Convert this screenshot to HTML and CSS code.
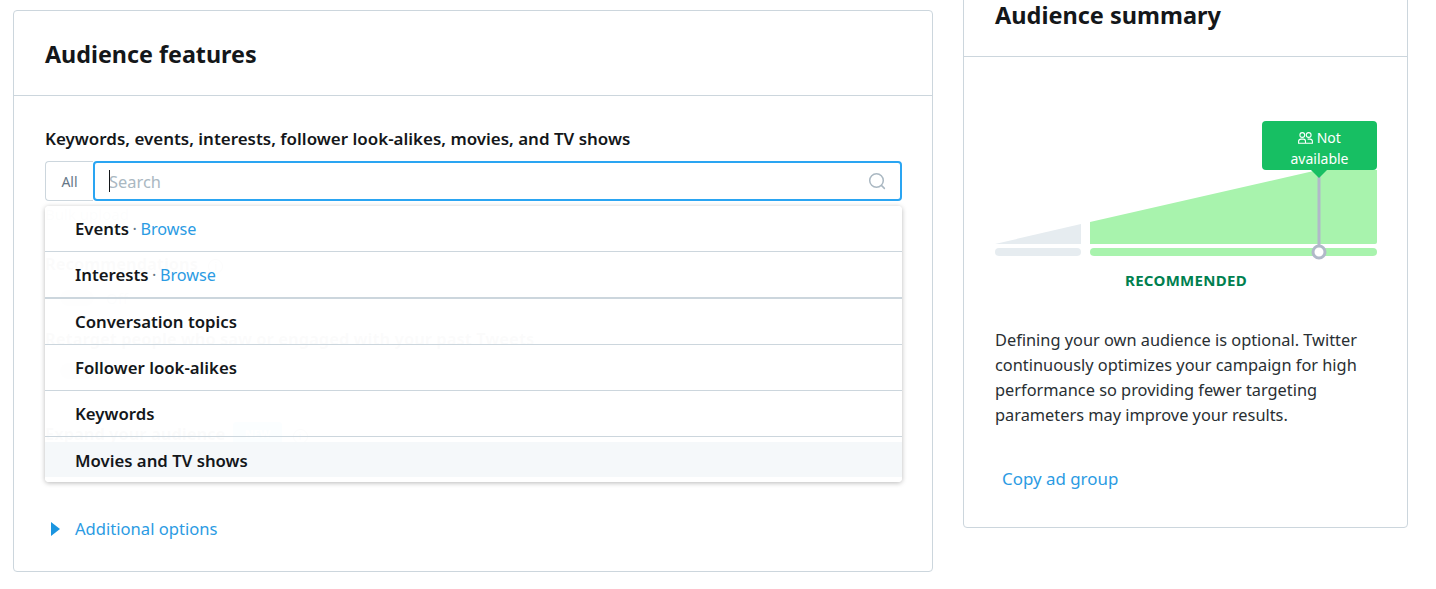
FILE: index.html
```html
<!DOCTYPE html>
<html lang="en">
<head>
<meta charset="utf-8">
<title>Audience features</title>
<link rel="stylesheet" href="styles.css">
</head>
<body>
<main class="page">
  <section class="card features">
    <header class="features-head"><h2 class="title">Audience features</h2></header>
    <div class="features-body">
      <div class="field-label">Keywords, events, interests, follower look-alikes, movies, and TV shows</div>
      <div class="search-wrap">
        <div class="search-row">
          <button class="all-btn">All</button>
          <div class="search-box">
            <span class="caret"></span>
            <input class="search-input" placeholder="Search">
            <svg class="search-icon" width="18" height="18" viewBox="0 0 18 18"><circle cx="8.5" cy="8.5" r="6.8" fill="none" stroke="#aab8c2" stroke-width="1.5"/><path d="M13.4 13.4l3 3" stroke="#aab8c2" stroke-width="1.5" stroke-linecap="round"/></svg>
          </div>
        </div>
        <div class="menu">
          <div class="menu-item"><b>Events</b> <span class="dot">·</span> <a class="link">Browse</a></div>
          <div class="menu-item thick"><b>Interests</b> <span class="dot">·</span> <a class="link">Browse</a></div>
          <div class="menu-item"><b>Conversation topics</b></div>
          <div class="menu-item"><b>Follower look-alikes</b></div>
          <div class="menu-item"><b>Keywords</b></div>
          <div class="menu-item active"><b>Movies and TV shows</b></div>
        </div>
      </div>
      <div class="behind">
        <div class="bulk">Bulk upload</div>
        <div class="behind-title rec">Recommendations <span class="info">i</span></div>
        <div class="toggle-row"><span class="toggle"></span><span>Off</span></div>
        <div class="behind-title retarget">Retarget people who saw or engaged with your past Tweets</div>
        <div class="toggle-row"><span class="toggle"></span></div>
        <div class="behind-title expand">Expand your audience <span class="badge">NEW</span> <span class="info">i</span></div>
      </div>
      <div class="additional"><span class="tri"></span><a class="link">Additional options</a></div>
    </div>
  </section>

  <aside class="card summary">
    <header class="summary-head"><h2 class="title summary-title">Audience summary</h2></header>
    <div class="summary-body">
      <div class="chart">
        <svg class="chart-svg" width="382" height="144" viewBox="0 0 382 144">
          <path d="M0 124L86 104V124Z" fill="#e6ecf0"/>
          <rect x="0" y="128" width="86" height="8" rx="4" fill="#e6ecf0"/>
          <path d="M95 102L323 50H382V122a2 2 0 0 1-2 2H95Z" fill="#a8f3ad"/>
          <rect x="95" y="128" width="287" height="8" rx="4" fill="#a8f3ad"/>
          <path d="M324 50V126" stroke="#b1b9c9" stroke-width="3"/>
          <circle cx="324" cy="132" r="6" fill="#fff" stroke="#b1b9c9" stroke-width="3"/>
        </svg>
        <div class="bubble">
          <svg class="people" width="15" height="12" viewBox="0 0 15 12"><g fill="none" stroke="#fff" stroke-width="1.1"><circle cx="4.3" cy="3" r="2.4"/><circle cx="10.7" cy="3" r="2.4"/><path d="M.6 11.2V9.6c0-1.6 1.2-2.5 2.5-2.5h2.4c1.2 0 2 .9 2 2.5v1.6zM7.5 11.2h6.9V9.6c0-1.6-1.2-2.5-2.5-2.5H9.6"/></g></svg>
          Not available
        </div>
      </div>
      <div class="recommended">RECOMMENDED</div>
      <p class="summary-text">Defining your own audience is optional. Twitter continuously optimizes your campaign for high performance so providing fewer targeting parameters may improve your results.</p>
      <a class="link copy">Copy ad group</a>
    </div>
  </aside>
</main>
</body>
</html>
```
FILE: styles.css
```css
* { box-sizing: border-box; }
html, body { margin: 0; height: 589px; overflow: hidden; background: #fff; }
body { font-family: "Noto Sans", "Open Sans", sans-serif; color: #14171a; font-size: 16px; }
.page { display: flex; align-items: flex-start; gap: 30px; padding: 10px 28px 0 13px; }
.card { border: 1px solid #ccd6dd; border-radius: 4px; background: #fff; }
.title { margin: 0; font-size: 23.3px; font-weight: 700; line-height: 30px; }
.summary-title { font-size: 23.5px; }
.link { color: #2b9be3; }

.features { width: 920px; height: 562px; flex: none; }
.features-head { height: 85px; padding: 28px 31px 0; border-bottom: 1px solid #ccd6dd; }
.features-body { padding: 33px 31px 0; }
.field-label { font-weight: 600; font-size: 16.95px; line-height: 20px; margin-bottom: 12px; white-space: nowrap; }

.search-wrap { position: relative; margin-right: -1px; }
.search-row { display: flex; height: 40px; }
.all-btn { width: 48px; flex: none; border: 1px solid #ccd6dd; border-right: 0; border-radius: 4px 0 0 4px; background: #fff; color: #657786; font: 14px "Noto Sans", sans-serif; padding: 0; }
.search-box { position: relative; flex: 1; display: flex; align-items: center; border: 2px solid #2aa5f2; border-radius: 4px; padding: 1px 22px 0 14px; }
.search-input { flex: 1; min-width: 0; border: 0; outline: 0; padding: 0; font: 16.4px "Noto Sans", sans-serif; color: #14171a; }
.search-input::placeholder { color: #aab8c2; opacity: 1; }
.caret { position: absolute; left: 14px; top: 7px; width: 1px; height: 22px; background: #14171a; }
.search-icon { position: absolute; right: 14px; top: 9px; }

.menu { position: absolute; z-index: 2; left: 0; right: 0; top: 45px; padding-bottom: 5px; border-radius: 4px; background: rgba(255,255,255,.985); box-shadow: 0 1px 5px rgba(0,0,0,.28); }
.menu-item { height: 46px; padding: 0 30px; display: flex; align-items: center; gap: 3.5px; font-size: 16.2px; border-bottom: 1px solid #ccd6dd; }
.menu-item b { font-weight: 600; font-size: 16.75px; }
.menu-item.thick { height: 47px; border-bottom-width: 2px; }
.menu-item.active { height: 35px; margin-top: 5px; padding-top: 2px; border-bottom: 0; background: #f5f8fa; }
.dot { color: #657786; }

.behind { height: 313px; padding-top: 3px; color: #14171a; }
.bulk { color: #657786; font-size: 15px; line-height: 20px; }
.behind-title { font-weight: 700; font-size: 16.4px; line-height: 24px; white-space: nowrap; }
.rec { margin-top: 28px; }
.retarget { margin-top: 19px; }
.expand { margin-top: 43px; }
.info { display: inline-block; width: 15px; height: 15px; margin-left: 6px; border: 1px solid #14171a; border-radius: 50%; font-size: 10px; line-height: 13px; text-align: center; font-weight: 400; }
.badge { display: inline-block; padding: 0 12px; margin-left: 3px; background: #1da1f2; color: #fff; font-size: 11px; border-radius: 3px; vertical-align: 2px; }
.toggle-row { display: flex; align-items: center; gap: 12px; margin-top: 12px; padding-left: 15px; color: #657786; font-size: 15px; }
.toggle { width: 34px; height: 16px; border-radius: 8px; background: #aab8c2; }

.additional { display: flex; align-items: center; gap: 15px; padding-left: 6px; margin-top: 3px; font-size: 16.6px; line-height: 24px; }
.tri { width: 0; height: 0; border-left: 9px solid #1b95e0; border-top: 7.5px solid transparent; border-bottom: 7.5px solid transparent; }

.summary { width: 445px; flex: none; margin-top: -40px; height: 558px; }
.summary-head { height: 86px; padding: 29px 31px 0; border-bottom: 1px solid #ccd6dd; }
.summary-body { padding: 63px 30px 0 31px; }
.chart { position: relative; height: 144px; }
.chart-svg { display: block; }
.bubble { position: absolute; top: 1px; right: 0; width: 115px; height: 49px; padding: 6px 12px 0; border-radius: 4px; background: #17bf63; color: #fff; font-size: 14px; line-height: 21px; text-align: center; }
.bubble::after { content: ""; position: absolute; left: 49px; top: 100%; border-left: 8px solid transparent; border-right: 8px solid transparent; border-top: 8px solid #17bf63; }
.people { vertical-align: -1px; }
.recommended { margin-top: 6px; text-align: center; color: #00804f; font-weight: 700; font-size: 15px; line-height: 20px; letter-spacing: .3px; }
.summary-text { margin: 38px 0 0; font-size: 16.35px; line-height: 25px; color: #292f33; }
.copy { display: block; margin: 39px 0 0 7px; font-size: 16.9px; line-height: 24px; }
```
